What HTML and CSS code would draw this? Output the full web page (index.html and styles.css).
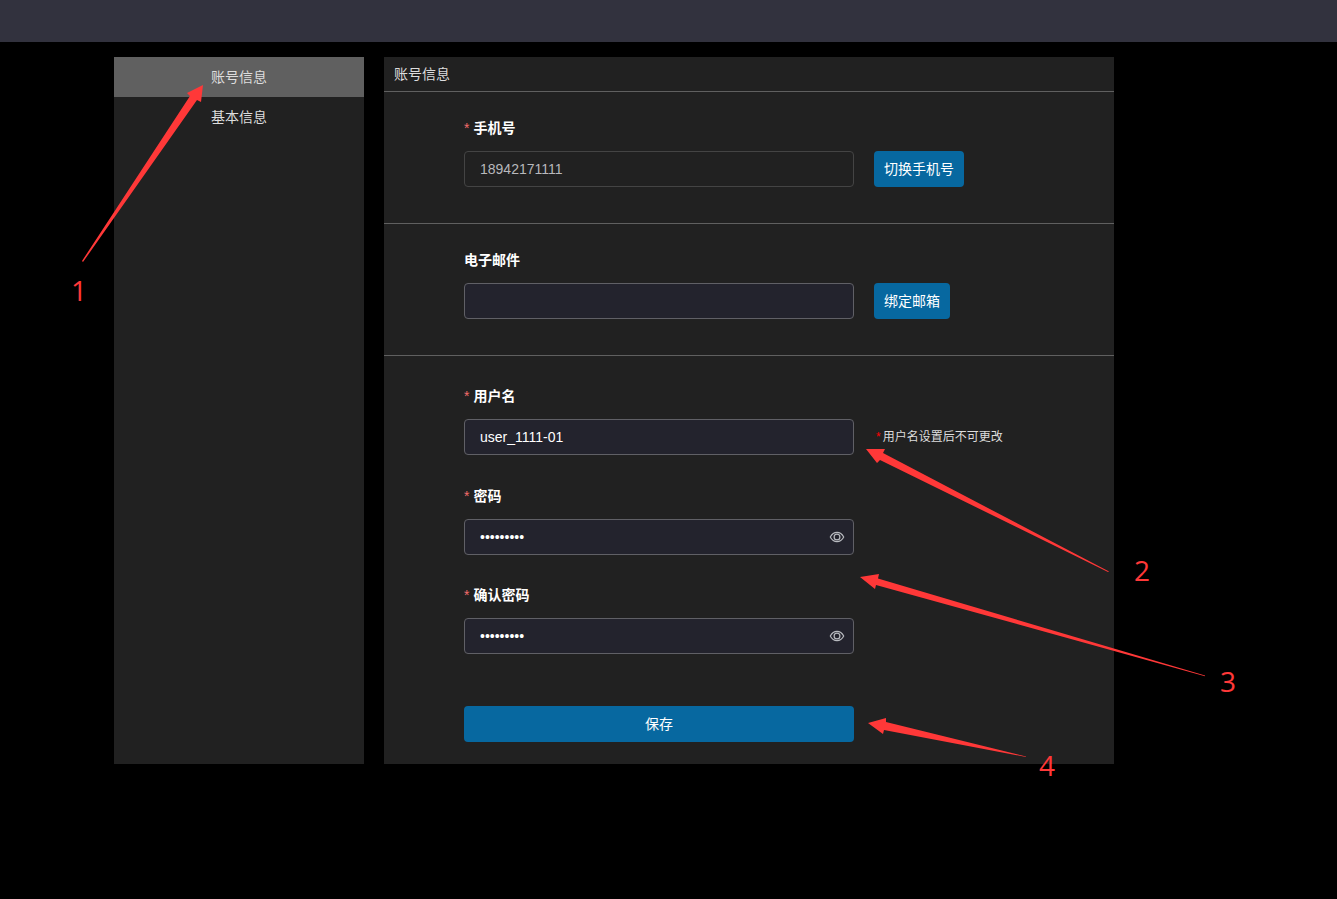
FILE: index.html
```html
<!DOCTYPE html>
<html lang="zh-CN">
<head>
<meta charset="utf-8">
<title>账号信息</title>
<link rel="stylesheet" href="styles.css">
</head>
<body>
<header class="topbar"></header>
<div class="layout">
  <nav class="sidebar">
    <a class="nav-item active" href="#account">账号信息</a>
    <a class="nav-item" href="#basic">基本信息</a>
  </nav>
  <main class="panel">
    <h1 class="panel-title">账号信息</h1>
    <form>
      <section class="section">
        <div class="field">
          <label class="label required" for="phone">手机号</label>
          <div class="row">
            <div class="control"><input class="input" id="phone" type="text" value="18942171111" disabled></div>
            <button class="btn" type="button">切换手机号</button>
          </div>
        </div>
      </section>
      <section class="section">
        <div class="field">
          <label class="label" for="email">电子邮件</label>
          <div class="row">
            <div class="control"><input class="input" id="email" type="text"></div>
            <button class="btn" type="button">绑定邮箱</button>
          </div>
        </div>
      </section>
      <section class="section credentials">
        <div class="field">
          <label class="label required" for="username">用户名</label>
          <div class="row">
            <div class="control"><input class="input" id="username" type="text" value="user_1111-01"></div>
            <p class="hint">用户名设置后不可更改</p>
          </div>
        </div>
        <div class="passwords">
          <div class="field">
            <label class="label required" for="password">密码</label>
            <div class="row">
              <div class="control">
                <input class="input" id="password" type="password" value="123456789">
                <button class="eye" type="button" aria-label="显示密码">
                  <svg viewBox="0 0 16 14" width="16" height="14"><path d="M1.3 7C3 3.7 5.2 2.3 8 2.3S13 3.7 14.7 7C13 10.3 10.8 11.7 8 11.7S3 10.3 1.3 7Z"/><circle cx="8" cy="7" r="2.9"/></svg>
                </button>
              </div>
            </div>
          </div>
          <div class="field">
            <label class="label required" for="confirm">确认密码</label>
            <div class="row">
              <div class="control">
                <input class="input" id="confirm" type="password" value="123456789">
                <button class="eye" type="button" aria-label="显示确认密码">
                  <svg viewBox="0 0 16 14" width="16" height="14"><path d="M1.3 7C3 3.7 5.2 2.3 8 2.3S13 3.7 14.7 7C13 10.3 10.8 11.7 8 11.7S3 10.3 1.3 7Z"/><circle cx="8" cy="7" r="2.9"/></svg>
                </button>
              </div>
            </div>
          </div>
        </div>
        <button class="btn save" type="submit">保存</button>
      </section>
    </form>
  </main>
  <svg class="guide" viewBox="114 57 1000 707" width="1000" height="707">
    <path d="M203 85L201 102L197 100L83 262L82 261L190 96L187 93Z"/>
    <path d="M866 449L885 449L883 453L1109 571.500L1108 572L880 460L877 463Z"/>
    <path d="M860 577L879 574L878 578.500L1205 675.500V676.200L876 585L875 589Z"/>
    <path d="M868 723L886 718L886 722L1026 756.500V757L884 730L883 734Z"/>
    <text x="71" y="301">1</text>
    <text x="1134" y="581">2</text>
    <text x="1220" y="692">3</text>
    <text x="1039" y="776">4</text>
  </svg>
</div>
</body>
</html>
```

FILE: styles.css
```css
* {
  box-sizing: border-box;
}

body {
  margin: 0;
  min-height: 100vh;
  background: #000;
  color: #fff;
  font: 14px/20px "Liberation Sans", "Noto Sans CJK SC", sans-serif;
}

.topbar {
  height: 42px;
  background: #32323e;
}

.layout {
  position: relative;
  display: flex;
  gap: 20px;
  max-width: 1109px;
  margin: 15px auto 0;
}

.sidebar {
  flex: 0 0 250px;
  background: #212121;
}

.nav-item {
  display: block;
  line-height: 40px;
  text-align: center;
  color: #ddd;
  text-decoration: none;
}

.nav-item.active {
  background: #606060;
}

.panel {
  flex: 0 1 730px;
  background: #212121;
}

.panel-title {
  margin: 0;
  padding: 0 10px;
  border-bottom: 1px solid #606060;
  font-size: 14px;
  font-weight: 400;
  line-height: 34px;
  color: #ddd;
}

.section {
  padding: 20px 80px 36px;
  border-bottom: 1px solid #606060;
}

.credentials {
  padding: 24px 80px 22px;
  border-bottom: 0;
}

.label {
  display: block;
  margin-bottom: 7px;
  font-weight: 700;
  line-height: 32px;
}

.required::before {
  content: "*";
  margin-right: 4px;
  color: #f56c6c;
  font-weight: 400;
}

.row {
  display: flex;
  align-items: center;
  gap: 20px;
}

.control {
  position: relative;
  flex: 0 1 390px;
}

.input {
  display: block;
  width: 100%;
  height: 36px;
  padding: 0 15px;
  border: 1px solid #606066;
  border-radius: 4px;
  background: #23232d;
  color: #fff;
  font: inherit;
}

.input:disabled {
  border-color: #444;
  background: #212121;
  color: #b8b8bc;
}

.eye {
  position: absolute;
  top: 11px;
  right: 9px;
  width: 16px;
  height: 14px;
  padding: 0;
  border: 0;
  background: none;
}

.eye svg {
  display: block;
  fill: none;
  stroke: #b8babf;
  stroke-width: 1.2;
}

.btn {
  height: 36px;
  padding: 0 10px;
  border: 0;
  border-radius: 4px;
  background: #0768a0;
  color: #fff;
  font: inherit;
  white-space: nowrap;
}

.hint {
  margin: 0;
  padding-left: 2px;
  font-size: 12px;
  color: #ddd;
}

.hint::before {
  content: "*";
  margin-right: 2px;
  color: #f00;
}

.passwords {
  display: grid;
  gap: 24px;
  margin-top: 25px;
}

.save {
  display: block;
  width: 100%;
  max-width: 390px;
  margin-top: 52px;
}

.guide {
  position: absolute;
  top: 0;
  left: 0;
  overflow: visible;
  fill: #ff3838;
  font: 28px "Open Sans", sans-serif;
  pointer-events: none;
}
```
